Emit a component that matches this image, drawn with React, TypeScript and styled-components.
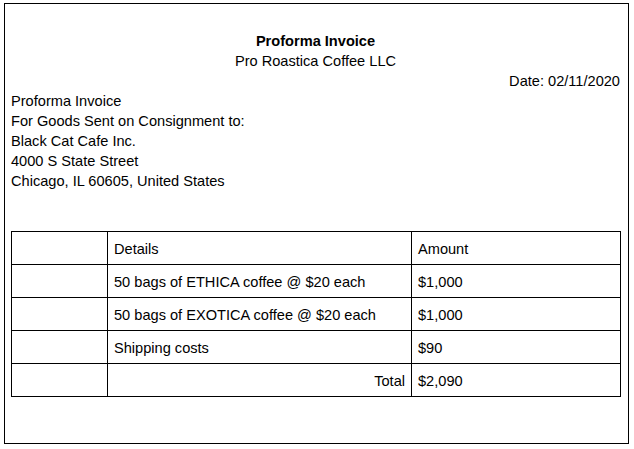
import React from "react";
import styled, { createGlobalStyle } from "styled-components";

const Global = createGlobalStyle`
  html, body { margin: 0; padding: 0; background: #fff; }
  body { font-family: "Liberation Sans", Arial, sans-serif; font-size: 14.6px; color: #000; }
`;

const Page = styled.div`
  box-sizing: border-box;
  margin: 3px 0 0 4px;
  width: 625px;
  height: 441px;
  border: 1px solid #000;
  padding: 27px 8px 0 6px;
  line-height: 20px;
`;

const Center = styled.div<{ $bold?: boolean }>`
  text-align: center;
  font-weight: ${(p) => (p.$bold ? 700 : 400)};
`;

const Right = styled.div`
  text-align: right;
`;

const Line = styled.div``;

const Table = styled.table`
  margin-top: 40px;
  width: 610px;
  border-collapse: collapse;
  table-layout: fixed;
`;

const Cell = styled.td<{ $w?: number; $right?: boolean }>`
  border: 1px solid #000;
  height: 33px;
  padding: 1px 6px 0;
  box-sizing: border-box;
  text-align: ${(p) => (p.$right ? "right" : "left")};
  vertical-align: middle;
  ${(p) => (p.$w ? `width: ${p.$w}px;` : "")}
`;

const rows = [
  ["50 bags of ETHICA coffee @ $20 each", "$1,000"],
  ["50 bags of EXOTICA coffee @ $20 each", "$1,000"],
  ["Shipping costs", "$90"],
];

export default function App() {
  return (
    <>
      <Global />
      <Page>
        <Center $bold>Proforma Invoice</Center>
        <Center>Pro Roastica Coffee LLC</Center>
        <Right>Date: 02/11/2020</Right>
        <Line>Proforma Invoice</Line>
        <Line>For Goods Sent on Consignment to:</Line>
        <Line>Black Cat Cafe Inc.</Line>
        <Line>4000 S State Street</Line>
        <Line>Chicago, IL 60605, United States</Line>
        <Table>
          <tbody>
            <tr>
              <Cell $w={96} />
              <Cell $w={304}>Details</Cell>
              <Cell>Amount</Cell>
            </tr>
            {rows.map(([d, a]) => (
              <tr key={d}>
                <Cell />
                <Cell>{d}</Cell>
                <Cell>{a}</Cell>
              </tr>
            ))}
            <tr>
              <Cell />
              <Cell $right>Total</Cell>
              <Cell>$2,090</Cell>
            </tr>
          </tbody>
        </Table>
      </Page>
    </>
  );
}
